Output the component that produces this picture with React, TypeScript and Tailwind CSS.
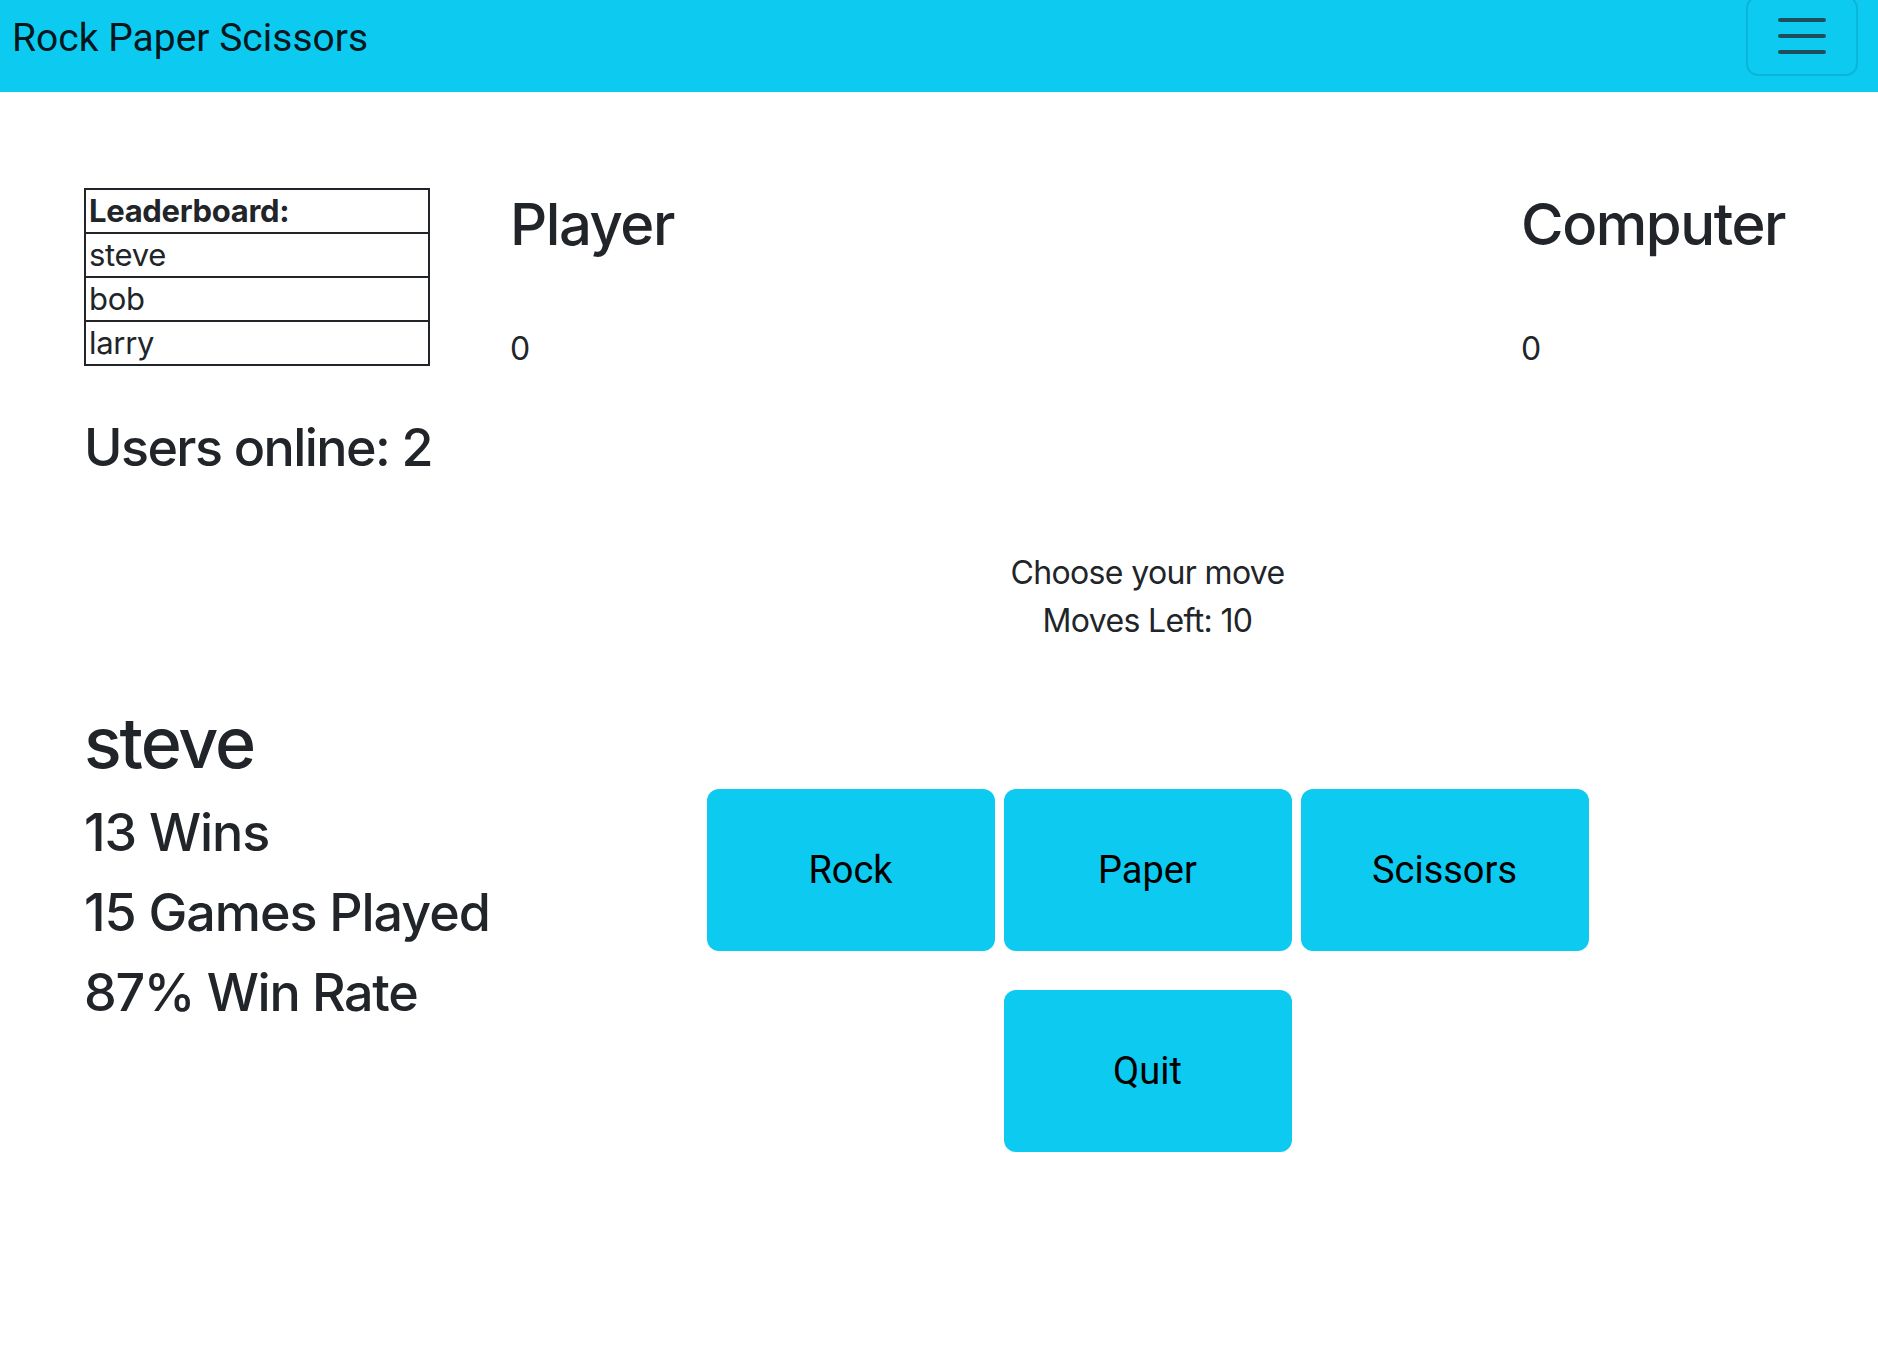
import { useState } from "react";

const leaders = ["steve", "bob", "larry"];
const moves = ["Rock", "Paper", "Scissors"];

function Toggler() {
    return (
        <button className="-mt-[4px] h-[80px] w-[112px] shrink-0 rounded-[12px] border-2 border-black/10 flex items-center justify-center">
            <svg width="60" height="60" viewBox="0 0 30 30" fill="none">
                <path d="M4 7h22M4 15h22M4 23h22" stroke="rgba(33,37,41,0.75)" strokeWidth="2" strokeLinecap="round" />
            </svg>
        </button>
    );
}

export default function App() {
    const [movesLeft] = useState(10);

    return (
        <div className="min-h-screen bg-white text-[#212529] font-['Inter','Noto_Sans',sans-serif]">
            <nav className="h-[92px] bg-[#0dcaf0] flex items-start justify-between pl-[12px] pr-[20px]">
                <span className="pt-[14px] text-[39px] leading-[48px] text-black/90 font-['Roboto',sans-serif]">Rock Paper Scissors</span>
                <Toggler />
            </nav>

            <div className="flex pl-[84px] pr-[93px] pt-[96px]">
                <aside className="w-[346px] shrink-0 whitespace-nowrap">
                    <table className="w-full border-collapse border-2 border-[#212529] text-[31px] leading-[42px] tracking-[-0.01em]">
                        <tbody>
                            <tr>
                                <td className="border-2 border-[#212529] px-[3px] font-bold">Leaderboard:</td>
                            </tr>
                            {leaders.map(name => (
                                <tr key={name}>
                                    <td className="border-2 border-[#212529] px-[3px]">{name}</td>
                                </tr>
                            ))}
                        </tbody>
                    </table>

                    <h3 className="mt-[50px] text-[52px] leading-[64px] font-medium tracking-[-0.03em]">Users online: 2</h3>

                    <div className="mt-[220px]">
                        <h1 className="text-[70px] leading-[86px] font-medium tracking-[-0.03em]">steve</h1>
                        <h3 className="mt-[15px] text-[52px] leading-[64px] font-medium tracking-[-0.02em]">13 Wins</h3>
                        <h3 className="mt-[16px] text-[52px] leading-[64px] font-medium tracking-[-0.02em]">15 Games Played</h3>
                        <h3 className="mt-[16px] text-[52px] leading-[64px] font-medium tracking-[-0.025em]">87% Win Rate</h3>
                    </div>
                </aside>

                <main className="flex-1 ml-[80px]">
                    <div className="flex justify-between">
                        <div>
                            <h2 className="text-[58px] leading-[72px] font-medium tracking-[-0.025em]">Player</h2>
                            <p className="mt-[65px] text-[32px] leading-[48px]">0</p>
                        </div>
                        <div>
                            <h2 className="text-[58px] leading-[72px] font-medium tracking-[-0.025em]">Computer</h2>
                            <p className="mt-[65px] text-[32px] leading-[48px]">0</p>
                        </div>
                    </div>

                    <div className="mt-[176px] text-center text-[32px] leading-[48px] tracking-[-0.02em]">
                        <p>Choose your move</p>
                        <p>Moves Left: {movesLeft}</p>
                    </div>

                    <div className="mt-[144px] flex flex-col items-center gap-[39px] font-['Roboto',sans-serif]">
                        <div className="flex gap-[9px]">
                            {moves.map(m => (
                                <button key={m} className="w-[288px] h-[162px] rounded-[12px] bg-[#0dcaf0] text-black text-[38px]">{m}</button>
                            ))}
                        </div>
                        <button className="w-[288px] h-[162px] rounded-[12px] bg-[#0dcaf0] text-black text-[38px]">Quit</button>
                    </div>
                </main>
            </div>
        </div>
    );
}
